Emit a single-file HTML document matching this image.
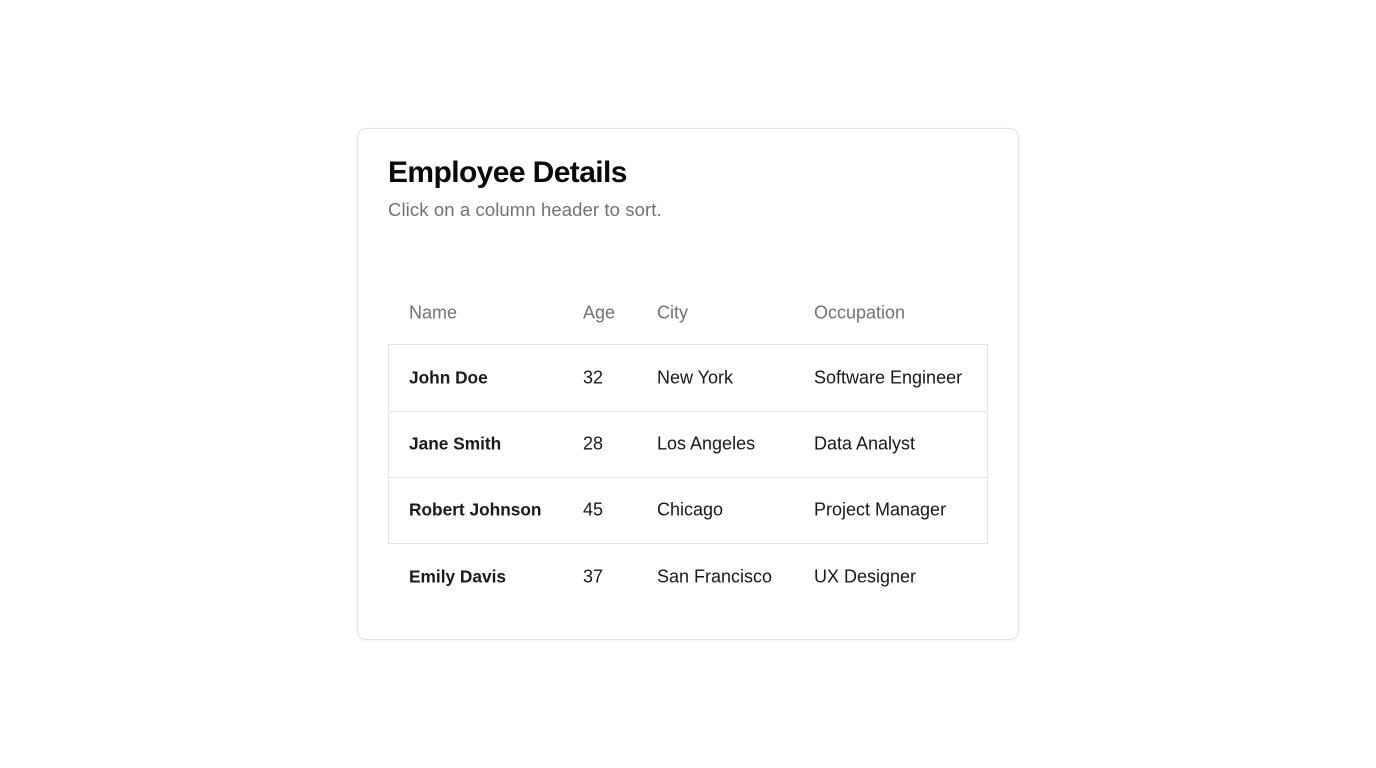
<!DOCTYPE html>
<html><head><meta charset="utf-8"><style>
*{margin:0;padding:0;box-sizing:border-box}
body{width:1376px;height:768px;background:#fff;font-family:"Liberation Sans",sans-serif;position:relative;overflow:hidden}
.card{position:absolute;left:357px;top:128px;width:662px;height:512px;border:1px solid #e4e4e7;border-radius:9px;box-shadow:0 1px 3px rgba(0,0,0,.06)}
h1{position:absolute;left:30px;top:27px;font-size:30px;font-weight:bold;color:#09090b;letter-spacing:-0.6px}
.sub{position:absolute;left:30px;top:70px;font-size:18.5px;color:#71717a;letter-spacing:0.1px}
.t{position:absolute;left:30px;top:149px;width:600px}
.row{position:relative;height:66.6px;font-size:18px;color:#18181b}
.row span{position:absolute;top:50%;transform:translateY(-50%);white-space:nowrap}
.hd{height:66px;color:#71717a;font-size:18px}
.hd span{margin-top:2px}
.b{border:1px solid #e4e4e7;border-bottom:none}
.row .n{left:21px}.row .a{left:195px}.row .c{left:269px}.row .o{left:426px}
.b .n{left:20px}.b .a{left:194px}.b .c{left:268px}.b .o{left:425px}
.bold .n{font-weight:bold;color:#1a1a1a;font-size:17.3px}
</style></head><body>
<div class="card">
<h1>Employee Details</h1>
<div class="sub">Click on a column header to sort.</div>
<div class="t">
<div class="row hd"><span class="n">Name</span><span class="a">Age</span><span class="c">City</span><span class="o">Occupation</span></div>
<div class="row b bold"><span class="n">John Doe</span><span class="a">32</span><span class="c">New York</span><span class="o">Software Engineer</span></div>
<div class="row b bold"><span class="n">Jane Smith</span><span class="a">28</span><span class="c">Los Angeles</span><span class="o">Data Analyst</span></div>
<div class="row b bold" style="border-bottom:1px solid #e4e4e7"><span class="n">Robert Johnson</span><span class="a">45</span><span class="c">Chicago</span><span class="o">Project Manager</span></div>
<div class="row bold"><span class="n">Emily Davis</span><span class="a">37</span><span class="c">San Francisco</span><span class="o">UX Designer</span></div>
</div>
</div>
</body></html>
